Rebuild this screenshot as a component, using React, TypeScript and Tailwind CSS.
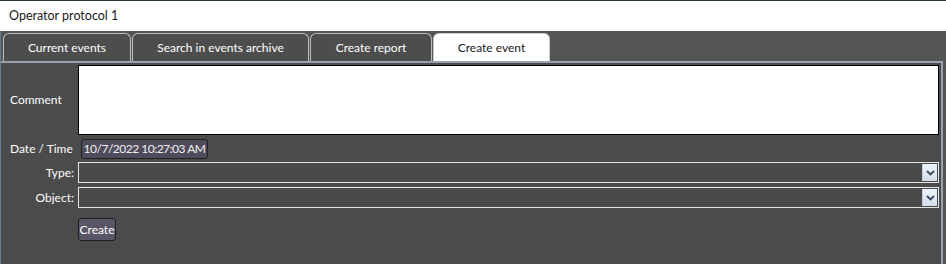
import React from "react";

const tabs = [
  { name: "Current events", w: "w-[128px]" },
  { name: "Search in events archive", w: "w-[177px]" },
  { name: "Create report", w: "w-[122px]" },
  { name: "Create event", w: "w-[117px]", active: true },
];

const Chevron: React.FC = () => (
  <svg width="9" height="6" viewBox="0 0 9 6">
    <path d="M1 1 L4.5 4.5 L8 1" fill="none" stroke="#3c4a5c" strokeWidth="1.8" />
  </svg>
);

const Combo: React.FC = () => (
  <div className="flex-1 h-[21px] border border-[#e6e6e6] bg-[#4a4a4a] flex justify-end items-stretch p-px">
    <div className="w-[15px] bg-gradient-to-b from-[#eef3f9] to-[#d3deeb] border-l border-[#c5ceda] flex items-center justify-center">
      <Chevron />
    </div>
  </div>
);

export default function App() {
  return (
    <div
      className="w-[946px] h-[264px] bg-[#555555] flex flex-col border-t border-[#2c3a44] text-[12px] overflow-hidden"
      style={{ fontFamily: "Lato, 'Noto Sans', sans-serif" }}
    >
      <div className="h-[30px] bg-white flex items-center pl-[9px] text-[12.5px] text-[#1a1a1a] shrink-0">
        Operator protocol 1
      </div>

      <div className="flex-1 flex flex-col border-l border-[#5c7e98]">
        <div className="flex items-end h-[30px] pl-[2px] pt-[2px] gap-[1px] shrink-0">
          {tabs.map((t) => (
            <div
              key={t.name}
              className={`${t.w} h-[28px] rounded-t-[6px] border border-b-0 flex items-center justify-center ${
                t.active
                  ? "bg-white border-[#cfcfcf] text-[#1a1a1a]"
                  : "bg-[#4d4d4d] border-[#bdbdbd] text-white"
              }`}
            >
              {t.name}
            </div>
          ))}
        </div>

        <div className="flex-1 bg-[#4b4b4b] border-t-2 border-r-2 border-[#9aa3ab] mr-[3px] pt-[2px] pr-[2px] text-white flex flex-col">
          <div className="flex items-center">
            <div className="w-[77px] pl-[9px]">Comment</div>
            <div className="flex-1 h-[70px] bg-white border border-black" />
          </div>

          <div className="flex items-center mt-[4px]">
            <div className="w-[80px] pl-[9px]">Date / Time</div>
            <div className="h-[20px] w-[127px] bg-[#4f4b5b] border border-[#222] rounded-[3px] flex items-center justify-center whitespace-nowrap tracking-[-0.5px] text-[#f0f0f0]">
              10/7/2022 10:27:03 AM
            </div>
          </div>

          <div className="flex items-center mt-[3px]">
            <div className="w-[77px] pr-[4px] text-right">Type:</div>
            <Combo />
          </div>

          <div className="flex items-center mt-[4px]">
            <div className="w-[77px] pr-[4px] text-right">Object:</div>
            <Combo />
          </div>

          <div className="flex mt-[10px] pl-[77px]">
            <div className="h-[23px] w-[38px] bg-[#5a5566] border border-[#1e1e1e] rounded-[3px] flex items-center justify-center">
              Create
            </div>
          </div>
        </div>
      </div>
    </div>
  );
}
